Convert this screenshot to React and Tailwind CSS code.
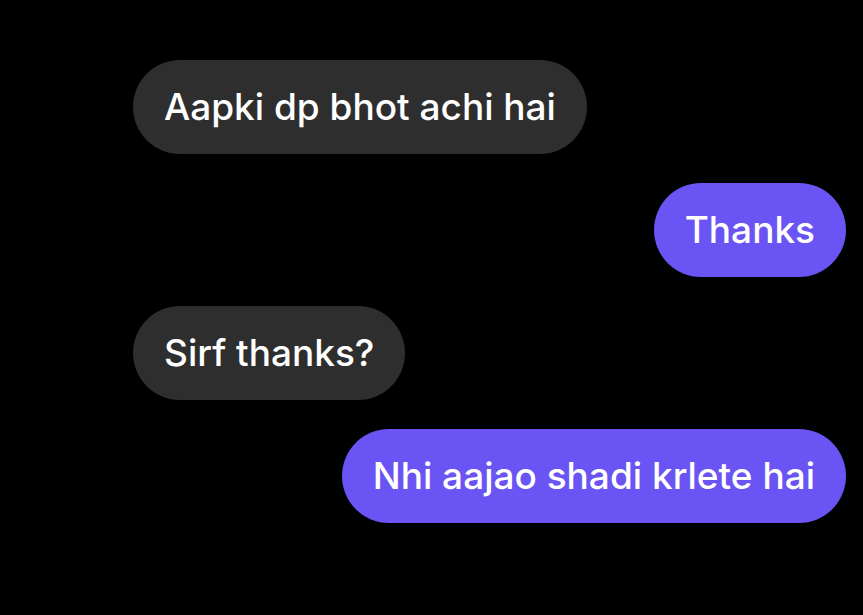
import React from 'react';

const messages = [
  { id: 1, text: 'Aapki dp bhot achi hai', mine: false },
  { id: 2, text: 'Thanks', mine: true },
  { id: 3, text: 'Sirf thanks?', mine: false },
  { id: 4, text: 'Nhi aajao shadi krlete hai', mine: true },
];

const Bubble = ({ text, mine }) => (
  <div
    className={`h-[94px] flex items-center px-[31px] rounded-full text-[37px] font-medium text-white ${
      mine ? 'self-end mr-[17px] bg-[#6a54f3]' : 'self-start ml-[133px] bg-[#2e2e2e]'
    }`}
  >
    {text}
  </div>
);

const App = () => {
  return (
    <div
      className="w-[863px] h-[615px] bg-black flex flex-col gap-[29px] pt-[60px] overflow-hidden"
      style={{ fontFamily: 'Inter, "Noto Sans", sans-serif' }}
    >
      {messages.map((m) => (
        <Bubble key={m.id} text={m.text} mine={m.mine} />
      ))}
    </div>
  );
};

export default App;
